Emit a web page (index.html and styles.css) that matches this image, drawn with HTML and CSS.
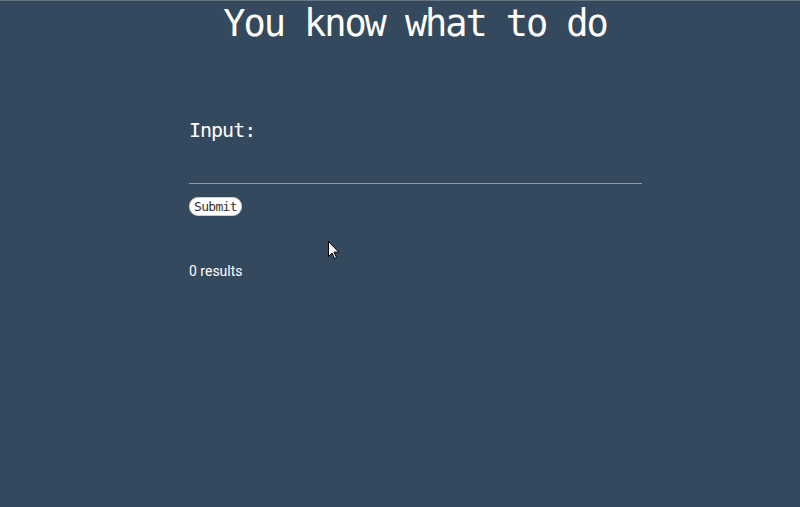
FILE: index.html
```html
<!DOCTYPE html>
<html>
<head>
<meta charset="utf-8">
<link rel="stylesheet" href="styles.css">
</head>
<body>
<div class="page">
  <h1 class="title">You know what to do</h1>
  <form class="form">
    <label class="label" for="q">Input:</label>
    <input class="field" id="q" type="text">
    <button class="submit" type="button">Submit</button>
  </form>
  <p class="results">0 results</p>
</div>
<svg class="cursor" width="12" height="19" viewBox="0 0 12 19"><path d="M0.5 0.5 L0.5 15.5 L4 12 L6.5 17.5 L8.5 16.5 L6 11.2 L10.8 11.2 Z" fill="#fff" stroke="#000" stroke-width="1"/></svg>
</body>
</html>
```
FILE: styles.css
```css
html, body {
  margin: 0;
  padding: 0;
  height: 100%;
}
body {
  background: #34495e;
  border-top: 1px solid #6b7580;
  box-sizing: border-box;
  color: #fff;
  position: relative;
  overflow: hidden;
}
.page {
  width: 453px;
  margin-left: 189px;
  display: flex;
  flex-direction: column;
}
.title {
  font-family: "DejaVu Sans Mono", monospace;
  font-weight: normal;
  font-size: 37px;
  letter-spacing: -2.1px;
  margin: 0;
  padding-top: 1px;
  line-height: 44px;
  text-align: center;
  width: 680px;
  margin-left: -114px;
}
.form {
  display: flex;
  flex-direction: column;
  align-items: flex-start;
  margin-top: 72px;
}
.label {
  font-family: "DejaVu Sans Mono", monospace;
  font-size: 20px;
  letter-spacing: -1px;
  line-height: 24px;
}
.field {
  width: 453px;
  box-sizing: border-box;
  background: transparent;
  border: none;
  border-bottom: 1px solid #8c99a6;
  height: 38px;
  margin-top: 4px;
  padding: 0;
  outline: none;
  color: #fff;
}
.submit {
  margin-top: 13px;
  font-family: "DejaVu Sans Mono", monospace;
  font-size: 13px;
  letter-spacing: -0.7px;
  color: #333;
  background: #fff;
  border: 1px solid #ccc;
  border-radius: 9px;
  height: 19px;
  width: 53px;
  padding: 0;
  line-height: 17px;
}
.results {
  font-family: Roboto, sans-serif;
  font-size: 14px;
  margin: 47px 0 0;
  line-height: 16px;
}
.cursor {
  position: absolute;
  left: 328px;
  top: 240px;
}
```
